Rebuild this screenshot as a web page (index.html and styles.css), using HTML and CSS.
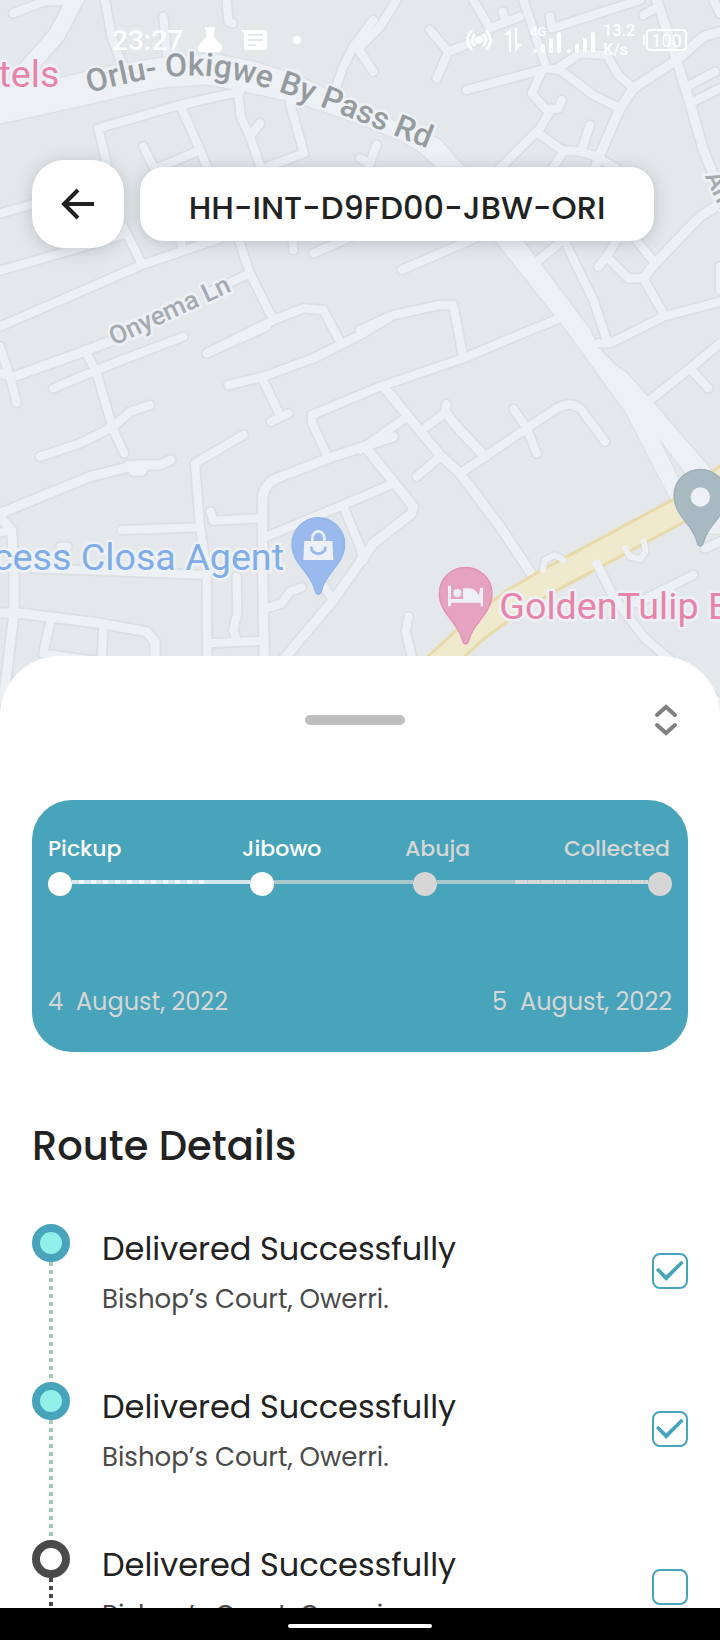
FILE: index.html
```html
<!DOCTYPE html>
<html lang="en">
<head>
<meta charset="utf-8">
<meta name="viewport" content="width=device-width, initial-scale=1">
<title>Track shipment</title>
<link rel="stylesheet" href="styles.css">
</head>
<body>
<div class="app">
  <section class="hero">
    <svg class="map" viewBox="0 0 2160 2190" preserveAspectRatio="xMidYMin slice" role="img" aria-label="Map">
      <defs>
        <path id="street" d="M40 40L130 5L240 0M315 0L335 110L365 190M490 50L500 160M680 0L685 65L698 70M1120 60L1060 140L1030 200L1005 270
          M320 490L295 385L540 315L720 275M545 325L600 450L625 510M430 440L465 510M470 505L590 455M715 280L722 350L750 410L785 510M780 370L757 400M870 310L912 460L790 505
          M0 640L120 607M0 812L200 755L380 700M370 680L425 790M0 980L425 795L660 715M540 710L545 735M715 715L750 820L820 960M750 820L620 880M880 715L880 750M940 760L1050 712
          M620 1060L820 960L910 925L970 930L1015 1015M1190 0L1140 80L1080 140M1080 155L1120 215M1420 0L1470 85L1560 50M1508 35L1515 60M1570 0L1640 205
          M1290 90L1345 155L1310 235M1345 155L1460 110M1400 270L1640 205L1680 210L1780 285L1860 325M1680 200L1740 160L1820 165L1855 225L1900 265
          M1650 50L1655 85L1920 0M1930 45L1975 20M2140 0L2160 40M2060 260L2145 215M2080 305L2160 265
          M1625 215L1595 280L1640 330L1675 325L1685 300M1655 325L1620 385L1490 515M1615 400L1685 450L1740 455L1790 470L1850 505M1770 375L1745 450M1690 455L1655 510M1130 435L1105 500M1080 475L1110 490
          M1205 810L1430 712M1610 785L1690 720M1690 715L1780 900L1822 1025M1850 720L1820 770L1795 800M1820 770L1885 835L1930 835L1990 940M1905 715L1965 790
          M2160 905L1990 950L1830 1030L1795 1030M1080 990L1180 945L1320 915L1360 915L1390 1075M1680 955L1580 995L1390 1075L1140 1160L935 1245L937 1270L985 1375
          M0 1040L30 1130L50 1208M160 1165L290 1110L380 1075L550 1010M255 1050L290 1120L340 1290L373 1360M120 1370L240 1330L340 1280L390 1235L450 1215
          M0 1598L35 1590M150 1870L130 1960L230 1975L320 1985M310 1880L305 1980M100 1705L300 1712L620 1725M182 1640L202 1640M365 1590L600 1582
          M730 1305L585 1390L600 1580L620 1710L622 1990M632 1535L640 1562L780 1555M620 1060L800 980M685 1155L790 1130L940 1075L1080 1005L1180 945M785 1130L835 1235M812 1265L865 1240
          M800 1610L1030 1515L1180 1450M1030 1520L1080 1640L1090 1680M1080 1350L1220 1250M965 1750L1000 1800M710 1730L712 1840L700 1890L710 1920M625 1930L790 1922M800 1825L845 1810L870 1775L905 1762
          M1265 1290L1335 1240L1339 1212M1380 1420L1455 1370L1580 1285L1670 1225Q1715 1200 1745 1230L1815 1325M1541 1228L1580 1285L1610 1360M1320 1370L1250 1430
          M2160 1030L2070 1105L1950 1200M2070 1105L2125 1165M1790 1690L1840 1790L1930 1910L2010 1980L2160 2110M2080 1725L1910 1810M1225 1850L1217 1895L1240 1990M2115 1645L2160 1625M2160 800L2160 870"/>
        <path id="loops" d="M1628 1710L1635 1680L1665 1665L1690 1680M1875 1645L1890 1670L1920 1678L1937 1655L1932 1625"/>
        <path id="avenue" d="M1970 0L2030 180L2070 310L2110 450L2170 600M2160 95L2110 110L2030 180L1900 265L1860 325L1795 475L1780 520M2170 605L2100 650L1965 790L1930 835
          M0 1120L40 1130L250 1055L340 1020M0 1540L270 1430L410 1395L480 1395L512 1380M0 1550L35 1590L42 1720L42 1840L10 2100M0 1838L60 1840L300 1870L440 1895L465 1925L465 1980
          M1180 1310L985 1375L830 1435Q788 1455 788 1500L788 1710L793 1990M1155 1165L1320 1365L1380 1420L1500 1580L1600 1730M1095 1340L1180 1445L1240 1520L1235 1540L1120 1630L1000 1800L840 1990M1339 1240L1370 1280L1455 1370"/>
        <path id="arterial" d="M230 -10L170 105L60 230"/>
        <path id="junction" d="M385 1395L440 1395L425 1415L400 1415Z"/>
        <path id="highway" d="M0 265L180 235L350 195L480 175L640 163L760 185L900 230L1080 320L1320 420L1390 500L1570 725L1770 990L1790 1040L1850 1100L1880 1120L1960 1210L2125 1400L2170 1480L2170 1600L2100 1600L2080 1450L1970 1305L2080 1530L2020 1510L1880 1240L1700 990L1490 725L1310 500L1260 455L1200 420L1080 370L900 310L720 270L620 252L480 262L250 315L0 370Z"/>
        <path id="trunk" d="M1295 2010L1425 1890L1545 1800L1640 1745L2040 1530L2180 1430"/>
      </defs>
      <g class="casing">
        <use href="#street" class="w-street"/><use href="#loops" class="w-loop"/><use href="#avenue" class="w-avenue"/><use href="#arterial" class="w-arterial"/><use href="#junction" class="w-street"/><use href="#highway" class="w-area"/>
      </g>
      <g class="surface">
        <use href="#highway" class="w-area"/><use href="#arterial" class="w-arterial"/><use href="#avenue" class="w-avenue"/><use href="#junction" class="w-street"/>
      </g>
      <use href="#trunk" class="trunk-edge"/><use href="#trunk" class="trunk"/>
      <g class="surface"><use href="#street" class="w-street"/><use href="#loops" class="w-loop"/></g>

      <path id="bypass" class="guide" d="M268 280C400 240 520 222 620 228C780 240 940 310 1400 492"/>
      <text class="road-label road-major"><textPath href="#bypass">Orlu- Okigwe By Pass Rd</textPath></text>
      <text class="road-label" transform="translate(342 1038) rotate(-25)">Onyema Ln</text>
      <text class="road-label" transform="translate(2114 528) rotate(65)">Am</text>

      <text class="place hotel" x="178" y="260" text-anchor="end">tels</text>
      <text class="place shop" x="852" y="1710" text-anchor="end">cess Closa Agent</text>
      <text class="place hotel" x="1498" y="1858">GoldenTulip B</text>

      <g transform="translate(955 1632)">
        <path class="pin pin-shop" d="M0 151C-8 151 -9 142 -12 132C-26 84 -79 58 -79 0A79 79 0 0 1 79 0C79 58 26 84 12 132C9 142 8 151 0 151Z"/>
        <path class="glyph" d="M-42 -9H42L45 48H-45Z"/><path class="glyph-line" d="M-18 -4V-18A18 20 0 0 1 18 -18V-4"/><path class="smile" d="M-21 11A21 18 0 0 0 21 11"/>
      </g>
      <g transform="translate(1397 1781)">
        <path class="pin pin-hotel" d="M0 151C-8 151 -9 142 -12 132C-26 84 -79 58 -79 0A79 79 0 0 1 79 0C79 58 26 84 12 132C9 142 8 151 0 151Z"/>
        <path class="glyph" d="M-53 -24H-44V16H-8V-16H8C25 -16 33 -8 39 6L44 -18H52V38H45V27H-44V38H-53Z"/><circle class="glyph" cx="-25" cy="-2" r="12"/>
      </g>
      <g transform="translate(2101 1487)">
        <path class="pin pin-other" d="M0 151C-8 151 -9 142 -12 132C-26 84 -79 58 -79 0A79 79 0 0 1 79 0C79 58 26 84 12 132C9 142 8 151 0 151Z"/>
        <circle class="glyph" cy="4" r="29"/>
      </g>
    </svg>

    <div class="status">
      <span class="clock">23:27</span>
      <svg class="flask" width="26" height="26" viewBox="0 0 26 26"><path fill="#fff" d="M8 0H18V2L17 3V10L25 19Q26 22 23 25H3Q0 22 1 19L9 10V3L8 2Z"/></svg>
      <svg class="message" width="26" height="22" viewBox="0 0 26 22"><path fill="#fff" fill-rule="evenodd" d="M0 1H24Q26 1 26 3V19Q26 21 24 21H5Q3 21 3 19V5ZM7 5V7H22V5ZM7 10V12H22V10ZM7 15V17H15V15Z"/></svg>
      <span class="more"></span>
      <span class="spacer"></span>
      <svg class="cast" width="26" height="24" viewBox="0 0 26 24" fill="none" stroke="#fff" stroke-width="2.5"><circle cx="13" cy="12" r="3.500" fill="#fff" stroke="none"/><path d="M9 6Q3 12 9 18M17 6Q23 12 17 18M6 2Q-3 12 6 22M20 2Q29 12 20 22"/></svg>
      <svg class="transfer" width="18" height="26" viewBox="0 0 18 26"><path fill="#fff" d="M7 1V25H5V8H0ZM11 1H13V17H18L11 25Z"/></svg>
      <svg class="signal" width="64" height="34" viewBox="0 0 64 34"><text x="0" y="13" class="net">4G</text><path d="M5 28V28M13 23V28M21 17V28M29 11V28M39 28V28M47 23V28M55 17V28M63 11V28" stroke="#fff" stroke-width="4" stroke-linecap="round"/></svg>
      <span class="speed">13.2<br>K/s</span>
      <span class="battery">100</span>
    </div>

    <header class="bar">
      <button class="back" type="button" aria-label="Back">
        <svg width="48" height="48" viewBox="0 0 24 24" fill="none" stroke="#222" stroke-width="2"><path d="M20 12H5M12 5L5 12L12 19"/></svg>
      </button>
      <h1 class="code">HH-INT-D9FD00-JBW-ORI</h1>
    </header>
  </section>

  <main class="sheet">
    <div class="grip">
      <span class="handle"></span>
      <button class="expand" type="button" aria-label="Expand">
        <svg width="24" height="32" viewBox="0 0 24 32" fill="none" stroke="#808080" stroke-width="4" stroke-linecap="round"><path d="M3 11L12 3L21 11M3 21L12 29L21 21"/></svg>
      </button>
    </div>

    <section class="card">
      <ol class="stops">
        <li class="done">Pickup</li><li class="done">Jibowo</li><li>Abuja</li><li>Collected</li>
      </ol>
      <div class="track">
        <span class="dot done"></span><span class="leg leg-a"></span>
        <span class="dot done"></span><span class="leg leg-b"></span>
        <span class="dot"></span><span class="leg leg-c"></span>
        <span class="dot"></span>
      </div>
      <div class="dates"><time datetime="2022-08-04">4&nbsp; August, 2022</time><time datetime="2022-08-05">5&nbsp; August, 2022</time></div>
    </section>

    <h2 class="heading">Route Details</h2>
    <ul class="route">
      <li class="step reached">
        <span class="rail"></span>
        <label class="info" for="s1"><span class="title">Delivered Successfully</span><span class="place-name">Bishop’s Court, Owerri.</span></label>
        <input class="tick" type="checkbox" id="s1" checked>
      </li>
      <li class="step reached">
        <span class="rail"></span>
        <label class="info" for="s2"><span class="title">Delivered Successfully</span><span class="place-name">Bishop’s Court, Owerri.</span></label>
        <input class="tick" type="checkbox" id="s2" checked>
      </li>
      <li class="step">
        <span class="rail"></span>
        <label class="info" for="s3"><span class="title">Delivered Successfully</span><span class="place-name">Bishop’s Court, Owerri.</span></label>
        <input class="tick" type="checkbox" id="s3">
      </li>
    </ul>
  </main>
  <footer class="nav"><span class="home"></span></footer>
</div>
</body>
</html>
```

FILE: styles.css
```css
*, *::before { box-sizing: border-box; }
body { margin: 0; font-family: Poppins, Inter, sans-serif; color: #222; background: #fff; }
h1, h2, ol, ul { margin: 0; padding: 0; list-style: none; }
h1, h2 { font-weight: 500; }
button { border: 0; padding: 0; background: none; cursor: pointer; }
svg { display: block; flex: none; }

.app { display: flex; flex-direction: column; height: 100vh; overflow: hidden; }

/* Map */
.hero { position: relative; flex: none; height: 40vh; }
.map { position: absolute; top: 0; left: 0; width: 100%; height: calc(100% + 74px); background: #e4e8eb; }
.map path, .map use { stroke-linecap: round; stroke-linejoin: round; }
.casing { stroke: #dce0e3; fill: none; }
.surface { stroke: #edf1f5; fill: none; }
.casing .w-loop { stroke-width: 26; }
.casing .w-street { stroke-width: 35; }
.casing .w-avenue { stroke-width: 38; }
.casing .w-arterial { stroke-width: 58; }
.casing .w-area { stroke-width: 10; }
.surface .w-loop { stroke-width: 17; }
.surface .w-street { stroke-width: 24; }
.surface .w-avenue { stroke-width: 27; }
.surface .w-arterial { stroke-width: 48; }
.surface .w-area { fill: #edf1f5; stroke-width: 2; }
.trunk-edge { fill: none; stroke: #e9dba9; stroke-width: 84; }
.trunk { fill: none; stroke: #efeacd; stroke-width: 66; }
.guide { fill: none; }
.map text { font-family: Roboto, sans-serif; paint-order: stroke; stroke: #edf1f5; stroke-width: 16; stroke-linejoin: round; }
.road-label { font-size: 78px; font-weight: 500; fill: #a5abb0; }
.map .road-major { font-size: 96px; fill: #969b9f; }
.place { font-size: 113px; }
.hotel { fill: #e684a9; }
.shop { fill: #7fadea; }
.pin { stroke-width: 4; }
.pin-shop { fill: #9abaee; stroke: #93b4ea; }
.pin-hotel { fill: #e6a3c0; stroke: #e58fb2; }
.pin-other { fill: #a9b9c2; stroke: #9bafba; }
.glyph { fill: #edf1f5; }
.glyph-line { fill: none; stroke: #edf1f5; stroke-width: 8; }
.smile { fill: none; stroke: #9abaee; stroke-width: 9; }

/* Status bar */
.status { position: relative; display: flex; align-items: center; height: 80px; padding: 0 33px 0 112px; color: #fff; font-family: Roboto, sans-serif; font-weight: 500; }
.clock { font-size: 28px; line-height: 32px; padding-top: 2px; }
.flask { margin-left: 14px; }
.message { margin-left: 18px; }
.more { width: 8px; height: 8px; margin-left: 26px; border-radius: 50%; background: #fff; }
.spacer { flex: 1; }
.transfer { margin-left: 12px; }
.signal { margin-left: 8px; overflow: visible; }
.net { font-size: 13px; fill: #fff; }
.speed { margin-left: 9px; font-size: 16px; line-height: 19px; }
.battery { position: relative; margin-left: 11px; width: 41px; height: 22px; border: 2px solid #fff; border-radius: 4px; font-size: 18px; font-weight: 400; line-height: 19px; text-align: center; }
.battery::before { content: ""; position: absolute; left: -5px; top: 4px; width: 2px; height: 10px; background: #fff; border-radius: 2px; }

/* Top bar */
.bar { position: relative; display: flex; align-items: center; gap: 16px; padding: 80px 66px 0 32px; }
.back, .code { background: #fff; box-shadow: 0 2px 16px rgba(60, 70, 80, .25); }
.back { display: grid; place-items: center; flex: none; width: 92px; height: 88px; border-radius: 32px; }
.code { flex: 1; height: 74px; border-radius: 24px; font-size: 32px; line-height: 82px; text-align: center; white-space: nowrap; }

/* Sheet */
.sheet { position: relative; flex: 1; min-height: 0; overflow: hidden; padding: 0 32px; background: #fff; border-radius: 60px 60px 0 0; }
.grip { display: grid; grid-template-columns: 1fr 100px 1fr; align-items: center; height: 128px; padding-right: 10px; }
.handle { grid-column: 2; height: 10px; border-radius: 5px; background: #bfbfbf; }
.expand { justify-self: end; }

.card { margin-top: 16px; padding: 35px 16px 0; height: 252px; border-radius: 40px; background: #47a4bb; color: #d6d6d6; }
.stops { display: grid; grid-template-columns: 194fr 163fr 120fr 147fr; font-size: 22px; line-height: 28px; font-weight: 500; }
.stops li:last-child { padding-right: 2px; text-align: right; }
.stops .done { color: #fff; }
.track { display: flex; margin-top: 9px; }
.dot { flex: none; width: 24px; height: 24px; border-radius: 50%; background: #d6d6d6; }
.dot.done { background: #fff; }
.leg { height: 4px; margin-top: 8px; }
.leg-a { flex: 178; background: linear-gradient(to right, transparent 74%, #d3e8ee 74%), repeating-linear-gradient(to right, #d3e8ee 0 7px, #f2f9fa 7px 12px); }
.leg-b { flex: 139; background: #a9c8cc; }
.leg-c { flex: 211; background: linear-gradient(to right, #a9c8cc 37%, transparent 37%), repeating-linear-gradient(to right, #d9d9d9 0 12px, #b5cdd2 12px 13px); }
.dates { display: flex; justify-content: space-between; margin-top: 88px; font-size: 24px; line-height: 36px; }

.heading { margin-top: 64px; font-size: 40px; line-height: 60px; }
.route { margin-top: 48px; }
.step { display: flex; align-items: flex-start; height: 158px; }
.rail { flex: none; width: 38px; height: 100%; margin-right: 32px; background: repeating-linear-gradient(to bottom, #4a4a4a 0 4px, transparent 4px 8px) 17px 38px / 4px 100% no-repeat; }
.reached .rail { background-image: repeating-linear-gradient(to bottom, #a1ccb8 0 4px, transparent 4px 8px); }
.rail::before { content: ""; display: block; width: 38px; height: 38px; border: 8px solid #4a4a4a; border-radius: 50%; background: #fff; }
.reached .rail::before { border-color: #47a4bb; background: #91f0ea; }
.info { flex: 1; display: flex; flex-direction: column; }
.title { font-size: 32px; line-height: 50px; }
.place-name { font-size: 26px; line-height: 50px; color: #4a4a4a; }
.tick { appearance: none; flex: none; width: 36px; height: 36px; margin: 29px 0 0; border: 2px solid #47a4bb; border-radius: 8px; background: #fff; }
.tick:checked::before { content: ""; display: block; width: 32px; height: 32px; background: #47a4bb; clip-path: polygon(6% 47%, 14% 40%, 38% 63%, 85% 18%, 93% 25%, 38% 81%); }

.nav { flex: none; display: grid; place-items: center; height: 32px; padding-top: 4px; background: #000; }
.home { width: 144px; height: 4px; border-radius: 2px; background: #fff; }
```
